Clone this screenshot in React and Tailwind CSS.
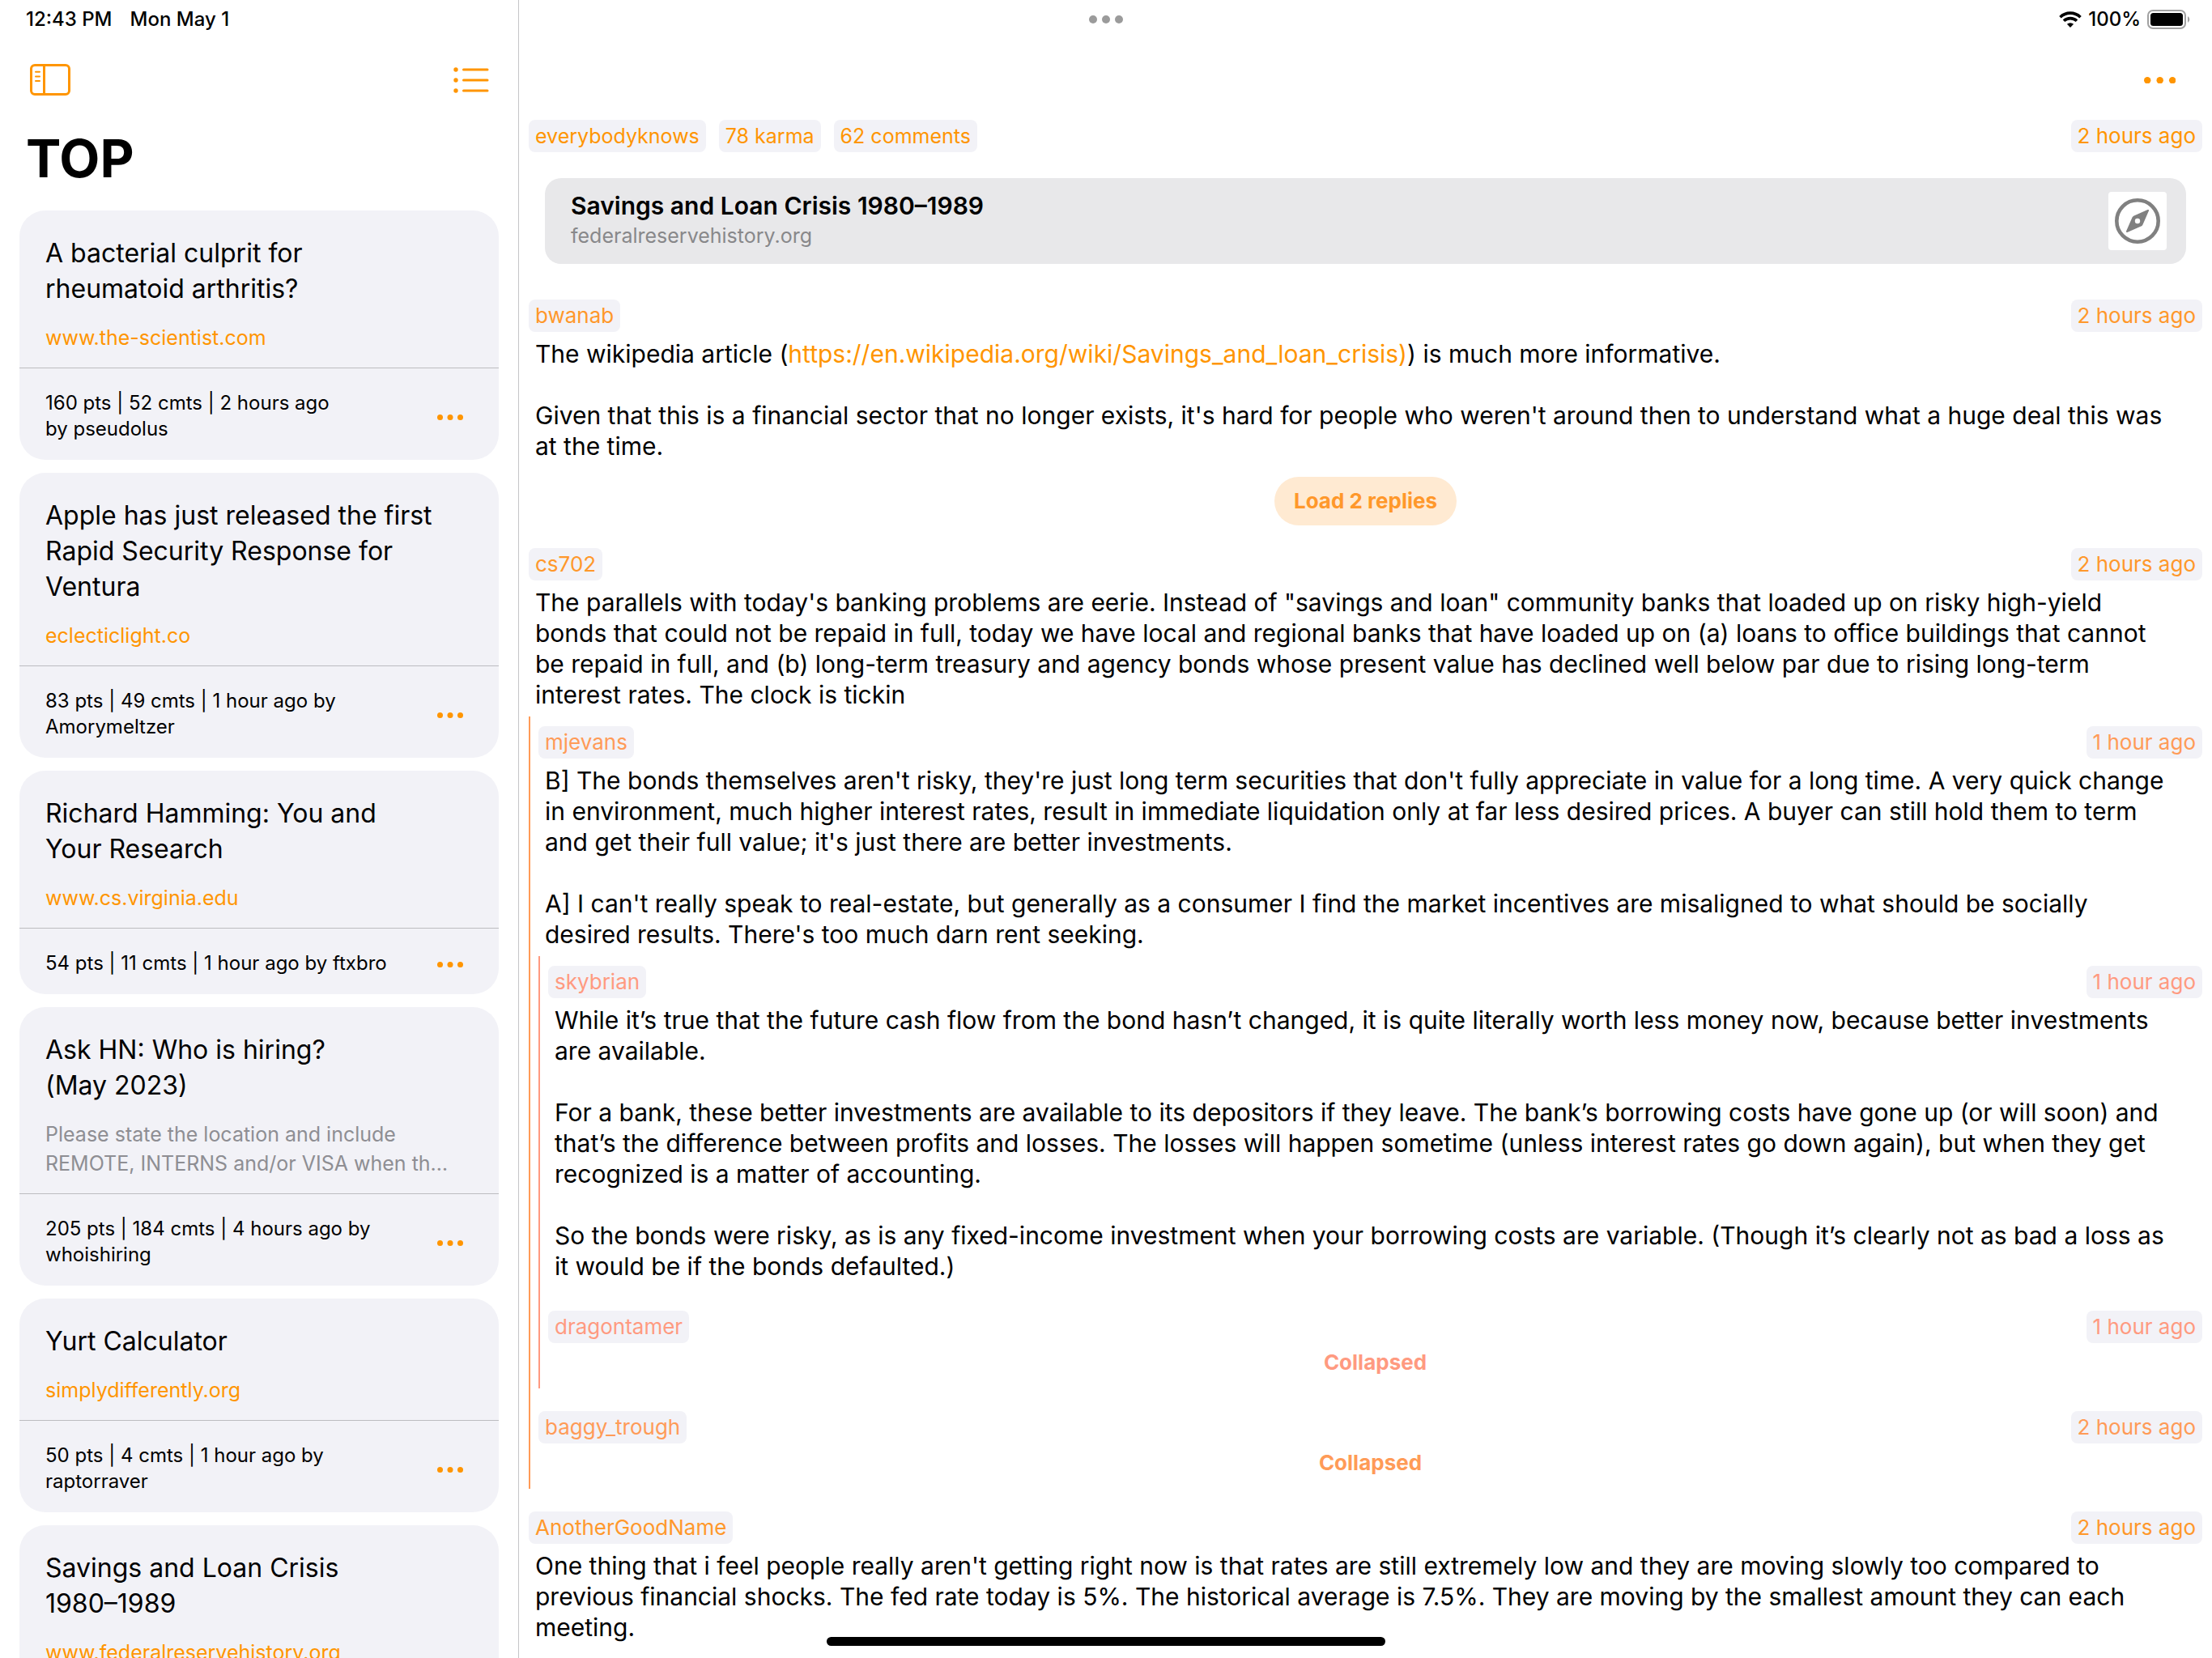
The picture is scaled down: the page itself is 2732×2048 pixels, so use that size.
import React from "react";

const STORIES = [
  {
    title: "A bacterial culprit for rheumatoid arthritis?",
    link: "www.the-scientist.com",
    meta: "160 pts | 52 cmts | 2 hours ago",
    author: "by\u00a0pseudolus",
  },
  {
    title: "Apple has just released the first Rapid Security Response for Ventura",
    link: "eclecticlight.co",
    meta: "83 pts | 49 cmts | 1 hour ago",
    author: "by Amorymeltzer",
  },
  {
    title: "Richard Hamming: You and Your\u00a0Research",
    link: "www.cs.virginia.edu",
    meta: "54 pts | 11 cmts | 1 hour ago",
    author: "by ftxbro",
  },
  {
    title: "Ask HN: Who is hiring? (May\u00a02023)",
    summary:
      "Please state the location and include REMOTE, INTERNS and/or VISA when that sort of candidate is welcome.",
    meta: "205 pts | 184 cmts | 4 hours ago",
    author: "by whoishiring",
  },
  {
    title: "Yurt Calculator",
    link: "simplydifferently.org",
    meta: "50 pts | 4 cmts | 1 hour ago",
    author: "by raptorraver",
  },
  {
    title: (
      <>
        Savings and Loan Crisis <span className="whitespace-nowrap">1980–1989</span>
      </>
    ),
    link: "www.federalreservehistory.org",
    meta: "78 pts | 62 cmts | 2 hours ago",
    author: "by everybodyknows",
  },
];

const COMMENTS = [
  {
    user: "bwanab",
    age: "2 hours ago",
    body: [
      <>
        The wikipedia article (
        <a href="https://en.wikipedia.org/wiki/Savings_and_loan_crisis)" className="text-[#ff9500]">
          https://en.wikipedia.org/wiki/Savings_and_loan_crisis)
        </a>
        ) is much more informative.
      </>,
      "Given that this is a financial sector that no longer exists, it's hard for people who weren't around then to understand what a huge deal this was at the time.",
    ],
    load: "Load 2 replies",
  },
  {
    user: "cs702",
    age: "2 hours ago",
    body: [
      'The parallels with today\'s banking problems are eerie. Instead of "savings and loan" community banks that loaded up on risky high-yield bonds that could not be repaid in full, today we have local and regional banks that have loaded up on (a) loans to office buildings that cannot be repaid in full, and (b) long-term treasury and agency bonds whose present value has declined well below par due to rising long-term interest rates. The clock is tickin',
    ],
    replies: [
      {
        user: "mjevans",
        age: "1 hour ago",
        body: [
          "B] The bonds themselves aren't risky, they're just long term securities that don't fully appreciate in value for a long time. A very quick change in environment, much higher interest rates, result in immediate liquidation only at far less desired prices. A buyer can still hold them to term and get their full value; it's just there are better investments.",
          "A] I can't really speak to real-estate, but generally as a consumer I find the market incentives are misaligned to what should be socially desired results. There's too much darn rent seeking.",
        ],
        replies: [
          {
            user: "skybrian",
            age: "1 hour ago",
            body: [
              "While it’s true that the future cash flow from the bond hasn’t changed, it is quite literally worth less money now, because better investments are available.",
              "For a bank, these better investments are available to its depositors if they leave. The bank’s borrowing costs have gone up (or will soon) and that’s the difference between profits and losses. The losses will happen sometime (unless interest rates go down again), but when they get recognized is a matter of accounting.",
              "So the bonds were risky, as is any fixed-income investment when your borrowing costs are variable. (Though it’s clearly not as bad a loss as it would be if the bonds defaulted.)",
            ],
          },
          { user: "dragontamer", age: "1 hour ago", collapsed: true },
        ],
      },
      { user: "baggy_trough", age: "2 hours ago", collapsed: true },
    ],
  },
  {
    user: "AnotherGoodName",
    age: "2 hours ago",
    body: [
      "One thing that i feel people really aren't getting right now is that rates are still extremely low and they are moving slowly too compared to previous financial shocks. The fed rate today is 5%. The historical average is 7.5%. They are moving by the smallest amount they can each meeting.",
    ],
  },
];

const LEVEL_TEXT = ["text-[#ff982b]", "text-[#ff9b57]", "text-[#ff9a80]"];
const LEVEL_BORDER = ["border-[#ff9b57]", "border-[#ff9a80]", "border-[#ff9a80]"];

function Dots({ className, r, gap }) {
  const w = gap * 2 + r * 2;
  return (
    <svg className={className} width={w} height={r * 2} viewBox={`0 0 ${w} ${r * 2}`} fill="currentColor" aria-hidden="true">
      <circle cx={r} cy={r} r={r} />
      <circle cx={r + gap} cy={r} r={r} />
      <circle cx={r + gap * 2} cy={r} r={r} />
    </svg>
  );
}

function SidebarIcon() {
  return (
    <svg width="52" height="40" viewBox="0 0 52 40" fill="none" stroke="currentColor" strokeWidth="3" strokeLinecap="round" aria-hidden="true">
      <rect x="2.5" y="1.5" width="47" height="36" rx="4.5" />
      <path d="M18.5 2v35" />
      <path d="M8 9.7h5M8 15.4h5M8 21h5" strokeWidth="2" />
    </svg>
  );
}

function ListIcon() {
  return (
    <svg width="44" height="32" viewBox="0 0 44 32" fill="currentColor" aria-hidden="true">
      <circle cx="3" cy="3" r="2.7" />
      <circle cx="3" cy="16" r="2.7" />
      <circle cx="3" cy="29" r="2.7" />
      <path d="M12.5 3h29.5M12.5 16h29.5M12.5 29h29.5" stroke="currentColor" strokeWidth="3" strokeLinecap="round" />
    </svg>
  );
}

function WifiIcon() {
  return (
    <svg width="28" height="20" viewBox="0 0 28 20" aria-hidden="true">
      <g fill="none" stroke="currentColor" strokeWidth="3.6">
        <path d="M1.5 7.2A18 18 0 0 1 26.5 7.2" />
        <path d="M6 11.8A11.6 11.6 0 0 1 22 11.8" />
      </g>
      <path d="M14 20l-4.1-4.2a6 6 0 0 1 8.2 0z" fill="currentColor" />
    </svg>
  );
}

function BatteryIcon() {
  return (
    <svg width="54" height="24" viewBox="0 0 54 24" aria-hidden="true">
      <rect x="1" y="1" width="46" height="22" rx="6" fill="none" stroke="#a1a1a1" strokeWidth="2" />
      <rect x="4" y="4" width="40" height="16" rx="3.5" fill="#000" />
      <path d="M50 8a4.6 4.6 0 0 1 0 8z" fill="#a1a1a1" />
    </svg>
  );
}

function CompassIcon() {
  return (
    <svg className="size-[72px] rounded-sm bg-white" viewBox="0 0 72 72" aria-hidden="true">
      <circle cx="36" cy="36" r="25.7" fill="none" stroke="#808080" strokeWidth="4.6" />
      <path
        fill="#808080"
        fillRule="evenodd"
        d="M48.6 22.1c1-.5 1.8.3 1.3 1.3L42.6 40.3c-.5 1.1-1.2 1.8-2.3 2.3L23.4 49.9c-1 .5-1.8-.3-1.3-1.3L29.4 31.7c.5-1.1 1.2-1.8 2.3-2.3zM36 32.8a3.2 3.2 0 1 0 0 6.4 3.2 3.2 0 0 0 0-6.4z"
      />
    </svg>
  );
}

function Story({ story }) {
  return (
    <article className="overflow-hidden rounded-[32px] bg-[#f2f2f7]">
      <div className="border-b border-[#bcbcc0] px-8 pt-[31px] pb-[19px]">
        <h2 className="pr-12 text-[32px] leading-[44px]">{story.title}</h2>
        {story.link && (
          <a href={`https://${story.link}`} className="mt-5 block text-[25px] leading-9 text-[#ff9500]">
            {story.link}
          </a>
        )}
        {story.summary && (
          <p className="mt-5 mr-6 line-clamp-2 text-[25px] leading-9 text-[#8e8e93]">{story.summary}</p>
        )}
      </div>
      <div className="flex items-center justify-between px-8 pt-[27px] pb-[22px]">
        <p className="max-w-[450px] text-[24px] leading-8">
          {story.meta} {story.author}
        </p>
        <button type="button" aria-label="Story options" className="mr-3 pt-0.5 text-[#ff9500]">
          <Dots r={3.5} gap={12.5} />
        </button>
      </div>
    </article>
  );
}

function Pill({ className = "text-[26px]", children }) {
  return <span className={`rounded-lg bg-[#f2f2f7] px-2 leading-10 ${className}`}>{children}</span>;
}

function Comment({ comment, level }) {
  const color = LEVEL_TEXT[level];
  return (
    <article className="pt-3">
      <header className={`flex justify-between ${color}`}>
        <Pill>{comment.user}</Pill>
        <Pill>{comment.age}</Pill>
      </header>
      {comment.collapsed && (
        <div className="flex justify-center pb-2">
          <button type="button" className={`text-[26px] leading-[48px] font-bold ${color}`}>
            Collapsed
          </button>
        </div>
      )}
      {comment.body && (
        <div className="flex flex-col gap-[38px] pt-2 pr-11 pb-2 pl-2 text-[30px] leading-[38px]">
          {comment.body.map((text, i) => (
            <p key={i}>{text}</p>
          ))}
        </div>
      )}
      {comment.load && (
        <div className="flex justify-center pt-[11px]">
          <button type="button" className={`rounded-full bg-[#ffead2] px-6 text-[26px] leading-[60px] font-bold ${color}`}>
            {comment.load}
          </button>
        </div>
      )}
      {comment.replies && (
        <div className={`flex flex-col gap-4 border-l-2 pl-[10px] ${LEVEL_BORDER[level]}`}>
          {comment.replies.map((reply) => (
            <Comment key={reply.user} comment={reply} level={level + 1} />
          ))}
        </div>
      )}
    </article>
  );
}

export default function App() {
  return (
    <div className="relative flex h-screen overflow-hidden bg-white font-['Inter',sans-serif] text-black">
      <aside className="w-[641px] shrink-0 border-r border-[#c6c6c8]">
        <div className="flex h-12 items-center gap-[22px] px-8 text-[24px] font-medium">
          <span>12:43 PM</span>
          <span>Mon May 1</span>
        </div>
        <div className="flex h-[100px] items-center justify-between px-9 pt-0.5 text-[#ff9500]">
          <button type="button" aria-label="Toggle sidebar">
            <SidebarIcon />
          </button>
          <button type="button" aria-label="Choose list">
            <ListIcon />
          </button>
        </div>
        <h1 className="px-8 text-[65px] leading-[96px] font-bold">TOP</h1>
        <div className="flex flex-col gap-4 px-6 pt-4">
          {STORIES.map((story) => (
            <Story key={story.meta} story={story} />
          ))}
        </div>
      </aside>

      <main className="min-w-0 flex-1 px-3">
        <div className="flex h-12 items-center justify-end gap-2 pr-[14px] text-[24px] font-medium">
          <WifiIcon />
          <span>100%</span>
          <BatteryIcon />
        </div>
        <div className="flex h-[100px] items-center justify-end pt-0.5 pr-[33px]">
          <button type="button" aria-label="More options" className="text-[#ff9500]">
            <Dots r={4.2} gap={15.5} />
          </button>
        </div>
        <div className="flex items-center justify-between text-[#ff9500]">
          <div className="flex gap-4">
            <Pill className="text-[25px]">everybodyknows</Pill>
            <Pill className="text-[25px]">78 karma</Pill>
            <Pill className="text-[25px]">62 comments</Pill>
          </div>
          <Pill>2 hours ago</Pill>
        </div>
        <a
          href="https://www.federalreservehistory.org"
          className="mx-5 mt-8 mb-8 flex items-center justify-between rounded-[20px] bg-[#e8e8ea] py-4 pr-6 pl-8"
        >
          <span className="flex flex-col">
            <span className="text-[30px] leading-9 font-semibold">Savings and Loan Crisis 1980–1989</span>
            <span className="text-[25px] leading-[38px] text-[#88888a]">federalreservehistory.org</span>
          </span>
          <CompassIcon />
        </a>
        <section aria-label="Comments" className="flex flex-col gap-4">
          {COMMENTS.map((comment) => (
            <Comment key={comment.user} comment={comment} level={0} />
          ))}
        </section>
      </main>

      <Dots className="absolute top-[19px] left-1/2 -translate-x-1/2 text-[#9b9b9b]" r={5} gap={16} />
      <div className="absolute bottom-[15px] left-1/2 h-[11px] w-[690px] -translate-x-1/2 rounded-full bg-black" />
    </div>
  );
}
